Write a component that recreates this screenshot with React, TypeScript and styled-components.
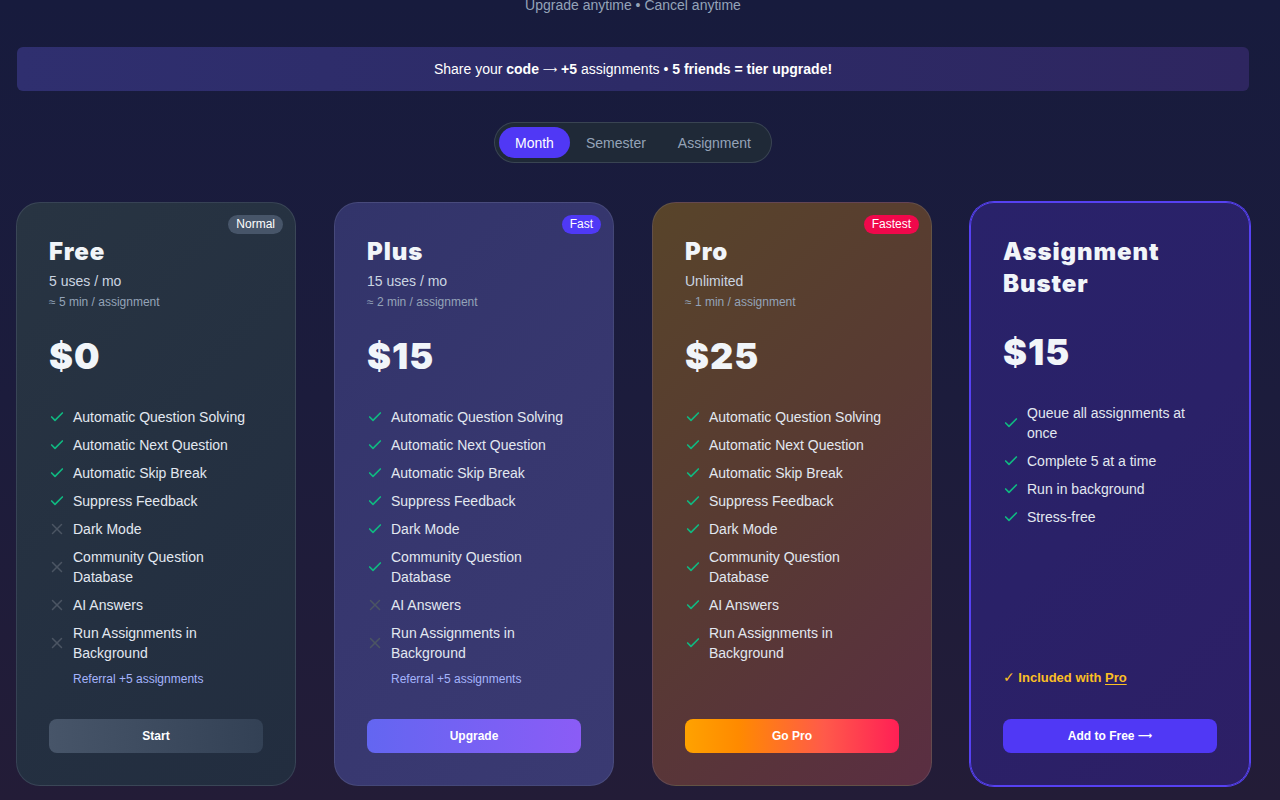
import React from 'react';
import styled, { createGlobalStyle } from 'styled-components';
import { Check, X } from 'lucide-react';

const GlobalStyle = createGlobalStyle`
  html, body {
    margin: 0;
    padding: 0;
    height: 100%;
    overflow: hidden;
  }
  body {
    background: linear-gradient(180deg, #171b3d 0%, #1c1c3c 50%, #231c37 100%);
    font-family: "Liberation Sans", Arial, sans-serif;
    color: #f1f5f9;
  }
  #root {
    min-height: 800px;
  }
`;

const Page = styled.div`
  padding: 0 30px 0 16px;
  display: flex;
  flex-direction: column;
  align-items: center;
`;

const Subtitle = styled.div`
  margin-top: -5px;
  font-size: 14px;
  line-height: 20px;
  color: #94a3b8;
`;

const Banner = styled.div`
  align-self: stretch;
  margin: 32px 1px 0;
  height: 44px;
  border-radius: 6px;
  background: linear-gradient(90deg, #2f2f6f 0%, #2d2b67 50%, #2e2660 100%);
  display: flex;
  align-items: center;
  justify-content: center;
  font-size: 14px;
  color: #ffffff;

  b {
    font-weight: 700;
  }
`;

const Arrow = styled.span`
  font-family: "DejaVu Sans", sans-serif;
  font-size: 10px;
  vertical-align: 1px;
`;

const Toggle = styled.div`
  margin-top: 31px;
  display: flex;
  padding: 4px;
  border: 1px solid rgba(148, 163, 184, 0.22);
  border-radius: 999px;
  background: #1f2937;
`;

const ToggleButton = styled.button<{ active?: boolean }>`
  height: 31px;
  padding: 0 16px;
  border: none;
  border-radius: 999px;
  font-family: inherit;
  font-size: 14px;
  cursor: pointer;
  background: ${p => (p.active ? '#5038f5' : 'transparent')};
  color: ${p => (p.active ? '#ffffff' : '#94a3b8')};
`;

const Cards = styled.div`
  align-self: stretch;
  margin-top: 39px;
  display: grid;
  grid-template-columns: repeat(4, 1fr);
  gap: 38px;
`;

const Card = styled.div<{ bg: string; highlight?: boolean }>`
  position: relative;
  display: flex;
  flex-direction: column;
  height: 584px;
  box-sizing: border-box;
  padding: 32px;
  border-radius: 24px;
  background: ${p => p.bg};
  border: 1px solid ${p => (p.highlight ? '#5641f2' : 'rgba(148, 163, 184, 0.18)')};
  ${p => p.highlight && 'box-shadow: 0 0 0 1px #5641f2;'}
`;

const Badge = styled.span<{ bg: string }>`
  position: absolute;
  top: 12px;
  right: 12px;
  padding: 0 8px;
  height: 19px;
  line-height: 19px;
  border-radius: 999px;
  font-size: 12px;
  color: #ffffff;
  background: ${p => p.bg};
`;

const Title = styled.h2`
  margin: 0;
  padding-top: 1px;
  font-family: "Arial Black", "Inter", "DejaVu Sans", sans-serif;
  font-weight: 900;
  font-size: 24px;
  line-height: 32px;
  letter-spacing: 0.9px;
  color: #f1f5f9;
`;

const Uses = styled.div`
  margin-top: 3px;
  font-size: 14px;
  line-height: 20px;
  color: #cbd5e1;
`;

const Speed = styled.div`
  margin-top: 3px;
  font-size: 12px;
  line-height: 16px;
  color: #94a3b8;
`;

const Price = styled.div<{ gap: number }>`
  margin-top: ${p => p.gap}px;
  font-family: "Arial Black", "Inter", "DejaVu Sans", sans-serif;
  font-weight: 900;
  font-size: 36px;
  line-height: 36px;
  letter-spacing: 1px;
  color: #f1f5f9;
`;

const Features = styled.ul`
  list-style: none;
  margin: 33px 0 0;
  padding: 0;
  display: flex;
  flex-direction: column;
  gap: 8px;
  flex: 1;
`;

const Feature = styled.li`
  display: flex;
  align-items: center;
  gap: 8px;
  font-size: 14px;
  line-height: 20px;
  color: #e2e8f0;
`;

const IconBox = styled.span<{ ok: boolean }>`
  flex: 0 0 16px;
  width: 16px;
  display: flex;
  align-items: center;
  justify-content: center;
  color: ${p => (p.ok ? '#10b981' : '#4b5563')};
`;

const CrossIcon = styled(X)`
  flex-shrink: 0;
  margin: 0 -1px;
`;

const Referral = styled.div`
  padding-left: 24px;
  font-size: 12px;
  line-height: 16px;
  color: #a5b4fc;
`;

const Included = styled.div`
  font-size: 13px;
  line-height: 18px;
  font-weight: 700;
  color: #fbbf24;

  u {
    text-underline-offset: 2px;
  }
`;

const CheckMark = styled.span`
  font-family: "DejaVu Sans", sans-serif;
  font-size: 14px;
`;

const CardButton = styled.button<{ bg: string }>`
  margin-top: 32px;
  height: 34px;
  border: none;
  border-radius: 8px;
  font-family: inherit;
  font-size: 12px;
  font-weight: 700;
  color: #ffffff;
  cursor: pointer;
  background: ${p => p.bg};
`;

interface Plan {
  name: string;
  uses?: string;
  speed?: string;
  price: string;
  badge?: { text: string; bg: string };
  features: { text: string; ok: boolean }[];
  referral?: boolean;
  included?: boolean;
  cta: React.ReactNode;
  cardBg: string;
  buttonBg: string;
  highlight?: boolean;
}

const base = [
  'Automatic Question Solving',
  'Automatic Next Question',
  'Automatic Skip Break',
  'Suppress Feedback',
  'Dark Mode',
  'Community Question Database',
  'AI Answers',
  'Run Assignments in Background',
];

const plans: Plan[] = [
  {
    name: 'Free',
    uses: '5 uses / mo',
    speed: '≈ 5 min / assignment',
    price: '$0',
    badge: { text: 'Normal', bg: '#475569' },
    features: base.map((text, i) => ({ text, ok: i < 4 })),
    referral: true,
    cta: 'Start',
    cardBg: 'linear-gradient(135deg, #283442 0%, #243041 60%, #222d3f 100%)',
    buttonBg: 'linear-gradient(90deg, #475569 0%, #334155 100%)',
  },
  {
    name: 'Plus',
    uses: '15 uses / mo',
    speed: '≈ 2 min / assignment',
    price: '$15',
    badge: { text: 'Fast', bg: '#4f39f6' },
    features: base.map((text, i) => ({ text, ok: i < 6 })),
    referral: true,
    cta: 'Upgrade',
    cardBg: 'linear-gradient(135deg, #32346a 0%, #37376f 50%, #3a3a72 100%)',
    buttonBg: 'linear-gradient(90deg, #6366f1 0%, #8b5cf6 100%)',
  },
  {
    name: 'Pro',
    uses: 'Unlimited',
    speed: '≈ 1 min / assignment',
    price: '$25',
    badge: { text: 'Fastest', bg: '#f0084b' },
    features: base.map(text => ({ text, ok: true })),
    cta: 'Go Pro',
    cardBg: 'linear-gradient(135deg, #58442a 0%, #583a33 50%, #5a2e42 100%)',
    buttonBg: 'linear-gradient(90deg, #ffa200 0%, #ff8a00 25%, #ff5a4a 65%, #ff1f55 100%)',
  },
  {
    name: 'Assignment Buster',
    price: '$15',
    features: [
      { text: 'Queue all assignments at once', ok: true },
      { text: 'Complete 5 at a time', ok: true },
      { text: 'Run in background', ok: true },
      { text: 'Stress-free', ok: true },
    ],
    included: true,
    cta: (
      <>
        Add to Free <Arrow>⟶</Arrow>
      </>
    ),
    cardBg: 'linear-gradient(135deg, #29226a 0%, #2a2168 50%, #2d1f66 100%)',
    buttonBg: '#5038f5',
    highlight: true,
  },
];

const App: React.FC = () => {
  return (
    <>
      <GlobalStyle />
      <Page>
        <Subtitle>Upgrade anytime • Cancel anytime</Subtitle>

        <Banner>
          <span>
            Share your <b>code</b> <Arrow>⟶</Arrow> <b>+5</b> assignments • <b>5 friends = tier upgrade!</b>
          </span>
        </Banner>

        <Toggle>
          <ToggleButton active>Month</ToggleButton>
          <ToggleButton>Semester</ToggleButton>
          <ToggleButton>Assignment</ToggleButton>
        </Toggle>

        <Cards>
          {plans.map(plan => (
            <Card key={plan.name} bg={plan.cardBg} highlight={plan.highlight}>
              {plan.badge && <Badge bg={plan.badge.bg}>{plan.badge.text}</Badge>}
              <Title>{plan.name}</Title>
              {plan.uses && <Uses>{plan.uses}</Uses>}
              {plan.speed && <Speed>{plan.speed}</Speed>}
              <Price gap={plan.uses ? 28 : 34}>{plan.price}</Price>
              <Features>
                {plan.features.map(f => (
                  <Feature key={f.text}>
                    <IconBox ok={f.ok}>
                      {f.ok ? <Check size={16} strokeWidth={2.5} /> : <CrossIcon size={18} strokeWidth={2} />}
                    </IconBox>
                    <span>{f.text}</span>
                  </Feature>
                ))}
              </Features>
              {plan.referral && <Referral>Referral +5 assignments</Referral>}
              {plan.included && (
                <Included>
                  <CheckMark>✓</CheckMark> Included with <u>Pro</u>
                </Included>
              )}
              <CardButton bg={plan.buttonBg}>{plan.cta}</CardButton>
            </Card>
          ))}
        </Cards>
      </Page>
    </>
  );
};

export default App;
